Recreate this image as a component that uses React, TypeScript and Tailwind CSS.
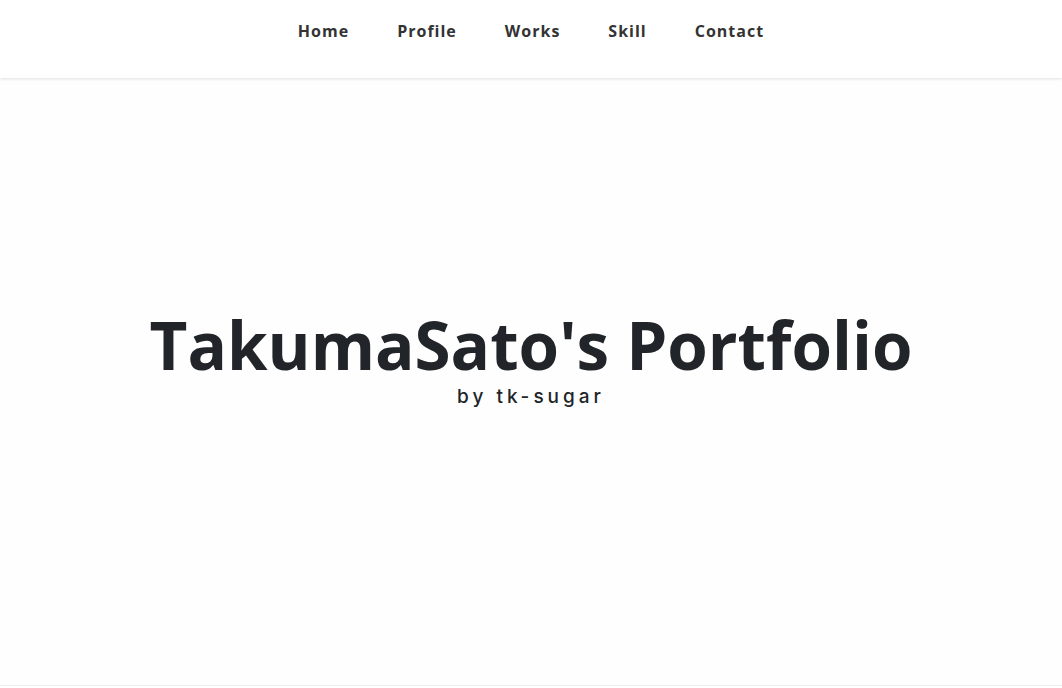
export default function App() {
  const items = ["Home", "Profile", "Works", "Skill", "Contact"];
  return (
    <div className="min-h-[688px] bg-white" style={{ fontFamily: "'Open Sans', sans-serif" }}>
      <header className="h-[78px] bg-white shadow-[0_1px_3px_rgba(0,0,0,0.12)] relative z-10">
        <nav className="flex justify-center pt-[19px]">
          {items.map((i) => (
            <a key={i} className="px-6 text-[16px] font-bold tracking-[1px] text-[#333] leading-[24px]">
              {i}
            </a>
          ))}
        </nav>
      </header>
      <section className="h-[608px] border-b border-[#eee] bg-[#fefefe] flex flex-col items-center justify-center pb-[44px]">
        <h1 className="text-[65.5px] font-bold leading-[70px] text-[#212529]">TakumaSato's Portfolio</h1>
        <p className="mt-[5px] text-[19px] font-medium tracking-[4px] text-[#212529] leading-[24px]" style={{ fontFamily: "Inter, sans-serif" }}>
          by tk-sugar
        </p>
      </section>
    </div>
  );
}
